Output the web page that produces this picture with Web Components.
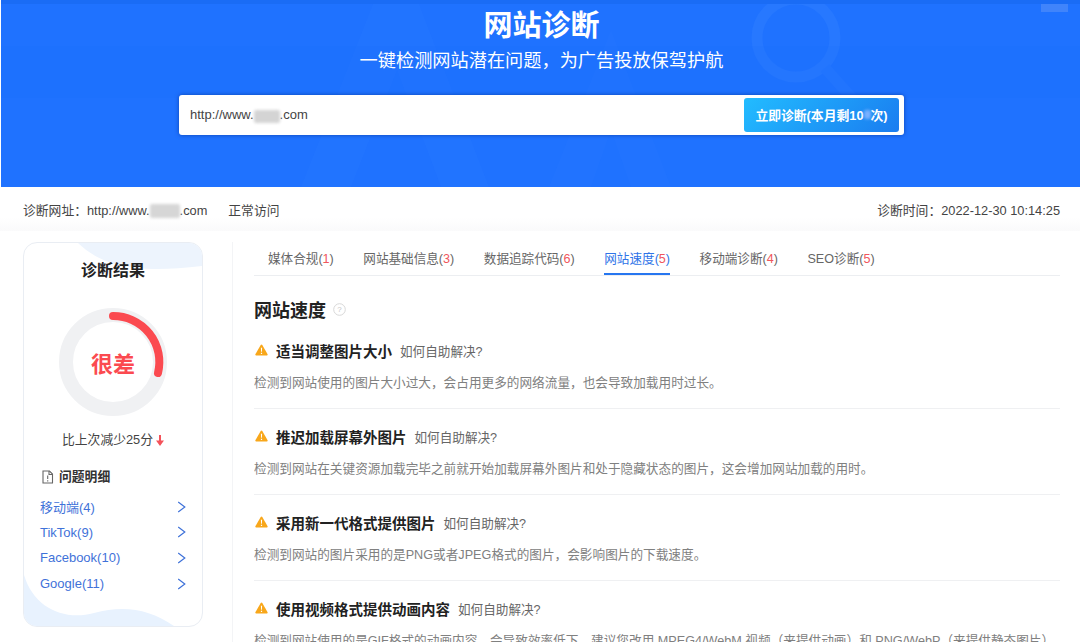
<!DOCTYPE html>
<html lang="zh-CN"><head><meta charset="utf-8"><title>网站诊断</title>
<style>
html,body{margin:0;padding:0;height:642px;overflow:hidden;background:#fff;}
body{font-family:"Liberation Sans","Noto Sans CJK SC",sans-serif;color:#333;}
</style></head><body>
<diag-hero></diag-hero>
<diag-info></diag-info>
<diag-main>
  <diag-side slot="side"></diag-side>
  <diag-tabs></diag-tabs>
  <diag-heading>网站速度</diag-heading>
  <diag-issue title="适当调整图片大小">检测到网站使用的图片大小过大，会占用更多的网络流量，也会导致加载用时过长。</diag-issue>
  <diag-issue title="推迟加载屏幕外图片">检测到网站在关键资源加载完毕之前就开始加载屏幕外图片和处于隐藏状态的图片，这会增加网站加载的用时。</diag-issue>
  <diag-issue title="采用新一代格式提供图片">检测到网站的图片采用的是PNG或者JPEG格式的图片，会影响图片的下载速度。</diag-issue>
  <diag-issue title="使用视频格式提供动画内容">检测到网站使用的是GIF格式的动画内容，会导致效率低下，建议您改用 MPEG4/WebM 视频（来提供动画）和 PNG/WebP（来提供静态图片）。</diag-issue>
</diag-main>
<script>
function def(name, html){
  customElements.define(name, class extends HTMLElement{
    connectedCallback(){
      if(this.shadowRoot) return;
      const r=this.attachShadow({mode:'open'});
      r.innerHTML = typeof html==='function' ? html(this) : html;
    }
  });
}
const blur=(w,h,c)=>`<span style="display:inline-block;width:${w}px;height:${h}px;background:${c};filter:blur(1.5px);vertical-align:middle;border-radius:2px"></span>`;

def('diag-hero',`<style>
:host{display:block;position:relative;height:187px;margin-left:1px;background:#1f72ff;overflow:hidden;color:#fff;box-sizing:border-box;}
.inner{position:relative;display:flex;flex-direction:column;align-items:center;padding:8px 0 0 2px;}
h1{margin:0;font-size:29px;line-height:36px;font-weight:700;}
p{margin:4px 0 21px;font-size:18.2px;line-height:26px;font-weight:400;}
.deco{position:absolute;left:0;top:0;}
.top{position:absolute;left:0;right:0;top:0;height:4px;background:#1a6cf5;}
.tag{position:absolute;right:12px;top:4px;width:27px;height:8px;background:#4084fb;}
</style>
<svg class="deco" width="1079" height="187" viewBox="0 0 1079 187" fill="none">
<path d="M300 187 L372 4 H418 L488 187 H440 L396 70 L350 187Z" fill="#2376ff" opacity=".5"/>
<path d="M548 187 L610 30 L670 187H630L610 130 L590 187Z" fill="#2376ff" opacity=".45"/>
<circle cx="795" cy="38" r="39" stroke="#2778ff" stroke-width="11"/>
<path d="M824 68 L858 106" stroke="#2476ff" stroke-width="11"/>
<rect y="46" width="1079" height="52" fill="#1a6df8" opacity=".2"/>
</svg>
<div class="top"></div><div class="tag"></div>
<div class="inner"><h1>网站诊断</h1><p>一键检测网站潜在问题，为广告投放保驾护航</p><diag-search></diag-search></div>`);

def('diag-search',`<style>
:host{display:flex;align-items:center;justify-content:space-between;box-sizing:border-box;width:725px;height:40px;background:#fff;border-radius:3px;box-shadow:0 0 4px rgba(0,40,130,.6);padding:0 5px 0 11px;color:#444;font-size:13px;}
.b{width:155px;height:34px;display:flex;align-items:center;justify-content:center;border-radius:3px;background:linear-gradient(135deg,#22bcff,#1a7cf0);color:#fff;font-weight:700;font-size:12.8px;white-space:nowrap;padding-bottom:1px;box-sizing:border-box;}
</style><span>http://www.${blur(26,13,'#d4d4d4')}.com</span><div class="b">立即诊断(本月剩10${blur(7,9,'#7ab0ff')}次)</div>`);

def('diag-info',`<style>
:host{display:flex;justify-content:space-between;align-items:center;box-sizing:border-box;height:44px;padding:0 20px 0 23px;font-size:12.8px;color:#444;background:linear-gradient(#fff 70%,#fafafb);}
.l{display:flex;gap:21px;align-items:center;}
</style><div class="l"><span>诊断网址：http://www.${blur(30,14,'#d6d6d6')}.com</span><span>正常访问</span></div><div>诊断时间：2022-12-30 10:14:25</div>`);

def('diag-main',`<style>
:host{display:grid;grid-template-columns:180px 1fr;column-gap:29px;padding:11px 20px 0 23px;}
.c{border-left:1.5px solid #f3f4f6;padding-left:21px;min-width:0;}
</style><slot name="side"></slot><div class="c"><slot></slot></div>`);

def('diag-side',`<style>
:host{display:flex;flex-direction:column;align-items:center;position:relative;box-sizing:border-box;height:385px;border:1px solid #e9edf3;border-radius:14px;overflow:hidden;background:#fff;}
.bg{position:absolute;left:0;top:0;}
.wrap{position:relative;display:flex;flex-direction:column;align-items:center;width:100%;}
h3{margin:17px 0 0;font-size:16px;line-height:22px;font-weight:700;color:#222;}
.ring{position:relative;width:108px;height:108px;margin-top:26px;}
.ring svg{display:block;}
.ring b{position:absolute;inset:0;display:flex;align-items:center;justify-content:center;font-size:22px;color:#fb4a50;font-weight:700;}
.cmp{margin-top:14px;font-size:12.8px;line-height:20px;color:#444;display:flex;align-items:center;gap:3px;}
.hd{align-self:flex-start;margin:17px 0 0 17px;display:flex;align-items:center;gap:5px;font-size:12.8px;line-height:20px;font-weight:700;color:#333;}
ul{list-style:none;margin:7px 0 0;padding:0 17px 0 16px;width:100%;box-sizing:border-box;}
li{display:flex;justify-content:space-between;align-items:center;height:25.6px;font-size:13px;color:#3f72d9;}
</style>
<svg class="bg" width="178" height="383" viewBox="0 0 178 383">
<path d="M54 0 C75 20 105 32 178 23 V0Z" fill="#edf4fd"/>
<path d="M0 332 C10 365 40 378 70 370 C100 362 125 366 150 383 H0Z" fill="#e8f2fe"/>
</svg>
<div class="wrap"><h3>诊断结果</h3>
<div class="ring"><svg width="108" height="108" viewBox="0 0 108 108" fill="none"><circle cx="54" cy="54" r="47" stroke="#f0f1f3" stroke-width="14"/><path d="M54 8 A46 46 0 0 1 99 65" stroke="#fb4a50" stroke-width="8" stroke-linecap="round"/></svg><b>很差</b></div>
<div class="cmp">比上次减少25分<svg width="8" height="11" viewBox="0 0 8 11"><path d="M3 0H5V5.5H8L4 11 0 5.5H3Z" fill="#f4525a"/></svg></div>
<div class="hd"><svg width="13" height="14" viewBox="0 0 13 14" fill="none" stroke="#666" stroke-width="1.1"><path d="M2 1H8.5L11.5 4V13H2Z"/><path d="M8 1V4.5H11.5M6.7 5.5V9M6.7 10.2V11.4"/></svg>问题明细</div>
<ul>${['移动端(4)','TikTok(9)','Facebook(10)','Google(11)'].map(t=>`<li><span>${t}</span><svg style="margin-right:-1px" width="9" height="12" viewBox="0 0 9 12" fill="none" stroke="#3f72d9" stroke-width="1.2"><path d="M1.2 1 L7.8 6 L1.2 11"/></svg></li>`).join('')}</ul></div>`);

def('diag-tabs',`<style>
:host{display:flex;gap:29.5px;height:34px;box-sizing:border-box;padding-left:14px;border-bottom:1px solid #eceef1;font-size:12.6px;color:#666;}
span{display:block;height:33px;line-height:34px;box-sizing:border-box;white-space:nowrap;}
i{font-style:normal;color:#f0565c;}
.a{color:#2f74e8;border-bottom:2px solid #2676f0;}
</style>${[['媒体合规',1],['网站基础信息',3],['数据追踪代码',6],['网站速度',5],['移动端诊断',4],['SEO诊断',5]].map(([t,n])=>`<span class="${t==='网站速度'?'a':''}">${t}(<i>${n}</i>)</span>`).join('')}`);

def('diag-heading',`<style>
:host{display:flex;align-items:center;gap:7px;margin-top:20px;margin-bottom:1px;height:26px;font-size:18px;font-weight:700;color:#222;}
svg{margin-top:1px;}
</style><slot></slot><svg width="13" height="13" viewBox="0 0 13 13" fill="none"><circle cx="6.5" cy="6.5" r="5.8" stroke="#d8d8d8"/><text x="6.5" y="9.4" text-anchor="middle" font-size="8" font-family="Liberation Sans" font-weight="400" fill="#c4c4c4">?</text></svg>`);

def('diag-issue',el=>`<style>
:host{display:block;box-sizing:border-box;height:86px;padding-top:17px;border-bottom:1px solid #eff0f2;}
.t{display:flex;align-items:center;height:20px;white-space:nowrap;}
svg{margin:0 8px 0 1px;flex:none;}
b{font-size:14.5px;color:#222;font-weight:700;}
a{margin-left:8px;font-size:12.6px;color:#666;}
.d{margin-top:13px;line-height:20px;font-size:12.65px;color:#808080;white-space:nowrap;overflow:hidden;}
</style><div class="t"><svg width="13" height="12" viewBox="0 0 13 12"><path d="M6.5 .6 Q7 .6 7.3 1.1 L12.6 10.2 Q13 11.2 12 11.4 H1 Q0 11.2 .4 10.2 L5.7 1.1 Q6 .6 6.5 .6Z" fill="#f8a71b"/><path d="M5.9 3.8H7.1L6.9 7.8H6.1ZM5.9 8.7H7.1V9.9H5.9Z" fill="#fff"/></svg><b>${el.getAttribute('title')}</b><a>如何自助解决?</a></div><div class="d"><slot></slot></div>`);
</script>
</body></html>
